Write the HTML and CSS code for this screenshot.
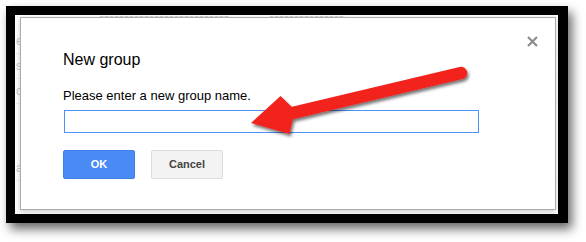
FILE: index.html
```html
<html>
    <head>
        <link rel="stylesheet" href="styles.css">
    </head>
    <body>
        <div class="shot">
            <div class="frame">
                <div class="page">
                    <div class="peek-top">
                        <span class="ghost w1"></span>
                        <span class="ghost w2"></span>
                    </div>
                    <div class="peek-row">e</div>
                    <div class="peek-row">s</div>
                    <div class="peek-row">c</div>
                    <div class="peek-row tall">a</div>

                    <div class="dialog">
                        <a href="#" class="close" title="Close">
                            <svg width="11" height="11" viewBox="0 0 11 11">
                                <path d="M1 1 L10 10 M10 1 L1 10" stroke="#8c8c8c" stroke-width="2.2" fill="none"/>
                            </svg>
                        </a>
                        <h3>New group</h3>
                        <p>Please enter a new group name.</p>
                        <input type="text" class="name-input">
                        <div class="buttons">
                            <a href="#" class="button ok">OK</a>
                            <a href="#" class="button cancel">Cancel</a>
                        </div>
                    </div>
                </div>
            </div>
        </div>

        <svg class="annotation" width="586" height="242" viewBox="0 0 586 242">
            <defs>
                <filter id="arrowShadow" x="-10%" y="-30%" width="130%" height="170%">
                    <feDropShadow dx="1.5" dy="2.5" stdDeviation="1.6" flood-color="#000" flood-opacity="0.55"/>
                </filter>
            </defs>
            <g filter="url(#arrowShadow)" fill="#f2211d">
                <path d="M284 115 L461 73" stroke="#f2211d" stroke-width="12.5" stroke-linecap="round"/>
                <polygon points="251,123 280.5,96 295,110 289.5,134"/>
            </g>
        </svg>
    </body>
</html>
```

FILE: styles.css
```css
html, body {
    margin: 0;
    padding: 0;
    background: #fff;
    font-family: "Liberation Sans", Arial, Helvetica, sans-serif;
}
body {
    position: relative;
    width: 586px;
    height: 242px;
    overflow: hidden;
}
.shot {
    padding: 6px 0 0 6px;
}
.frame {
    width: 543px;
    height: 199px;
    border-style: solid;
    border-color: #000;
    border-width: 9px 10px 9px 9px;
    box-shadow: 4px 6px 10px rgba(0, 0, 0, 0.6);
}
.page {
    position: relative;
    width: 100%;
    height: 100%;
    background: #fff;
    overflow: hidden;
}
.peek-top {
    display: flex;
    height: 2px;
    padding-top: 1px;
    margin-bottom: 11px;
}
.ghost {
    height: 1px;
    background: repeating-linear-gradient(90deg, #c9ced6 0 3px, #eef0f3 3px 5px);
}
.w1 {
    margin-left: 85px;
    width: 130px;
}
.w2 {
    margin-left: 40px;
    width: 75px;
}
.peek-row {
    height: 24px;
    font-size: 12px;
    line-height: 24px;
    color: #c6c6c6;
    margin-left: 1px;
    border-bottom: 1px solid #f3f3f3;
}
.peek-row.tall {
    margin-top: 52px;
}
.dialog {
    position: absolute;
    top: 2px;
    left: 5px;
    right: 2px;
    bottom: 4px;
    background: #fff;
    border: 1px solid #acacac;
    box-shadow: 0 2px 6px rgba(0, 0, 0, 0.2);
    padding: 32px 42px 0 42px;
    color: #000;
}
.close {
    position: absolute;
    top: 18px;
    right: 17px;
    width: 11px;
    height: 11px;
    line-height: 0;
}
h3 {
    margin: 0;
    font-size: 16px;
    font-weight: normal;
    line-height: 20px;
}
p {
    margin: 18px 0 0 0;
    font-size: 13px;
    line-height: 16px;
}
.name-input {
    display: block;
    box-sizing: border-box;
    width: 415px;
    height: 23px;
    margin: 6px 0 0 1px;
    padding: 0 8px;
    border: 1px solid #4d90fe;
    outline: none;
    font-size: 13px;
    font-family: inherit;
}
.buttons {
    display: flex;
    gap: 16px;
    margin-top: 17px;
}
.button {
    box-sizing: border-box;
    width: 72px;
    height: 29px;
    line-height: 27px;
    text-align: center;
    font-size: 11px;
    font-weight: bold;
    text-decoration: none;
    border-radius: 2px;
}
.ok {
    color: #fff;
    background: #4a8af4;
    border: 1px solid #3f7fe9;
}
.cancel {
    color: #444;
    background: #f3f3f3;
    border: 1px solid #dcdcdc;
}
.annotation {
    position: absolute;
    top: 0;
    left: 0;
    pointer-events: none;
}
```
